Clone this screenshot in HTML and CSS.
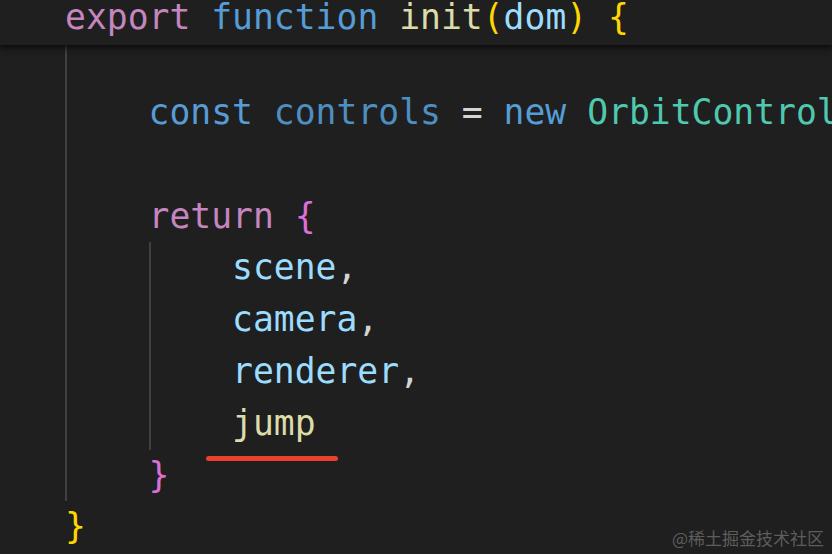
FILE: index.html
```html
<!DOCTYPE html>
<html>
<head>
<meta charset="utf-8">
<link rel="stylesheet" href="styles.css">
</head>
<body>
<div class="editor">
  <div class="sticky">
    <div class="line"><span class="kw">export</span> <span class="st">function</span> <span class="fn">init</span><span class="b1">(</span><span class="var">dom</span><span class="b1">)</span> <span class="b1">{</span></div>
  </div>
  <div class="code">
    <div class="line"><span class="ind"></span></div>
    <div class="line"><span class="ind"></span><span class="st">const</span> <span class="cv">controls</span> <span class="op">=</span> <span class="st">new</span> <span class="cls">OrbitControls</span></div>
    <div class="line"><span class="ind"></span></div>
    <div class="line"><span class="ind"></span><span class="kw">return</span> <span class="b2">{</span></div>
    <div class="line"><span class="ind"></span><span class="ind"></span><span class="var">scene</span><span class="op">,</span></div>
    <div class="line"><span class="ind"></span><span class="ind"></span><span class="var">camera</span><span class="op">,</span></div>
    <div class="line"><span class="ind"></span><span class="ind"></span><span class="var">renderer</span><span class="op">,</span></div>
    <div class="line"><span class="ind"></span><span class="ind"></span><span class="fn">jump</span></div>
    <div class="line"><span class="ind"></span><span class="b2">}</span></div>
    <div class="line"><span class="b1">}</span></div>
  </div>
  <div class="mark"></div>
  <div class="watermark">@稀土掘金技术社区</div>
</div>
</body>
</html>
```
FILE: styles.css
```css
html, body {
  margin: 0;
  padding: 0;
  background: #1f1f1f;
}
.editor {
  position: relative;
  width: 832px;
  height: 554px;
  overflow: hidden;
  background: #1f1f1f;
  font-family: "DejaVu Sans Mono", monospace;
  font-size: 34.7px;
  color: #d4d4d4;
}
.sticky {
  position: absolute;
  left: 0;
  top: 0;
  right: 0;
  height: 44.5px;
  background: #1f1f1f;
  box-shadow: 0 2px 6px 1px #0c0c0c;
  z-index: 2;
  padding-left: 65px;
  box-sizing: border-box;
}
.sticky .line {
  line-height: 35px;
  height: 35px;
}
.code {
  padding-top: 35.3px;
  padding-left: 65px;
}
.line {
  display: block;
  height: 51.8px;
  line-height: 51.8px;
  white-space: pre;
}
.ind {
  display: inline-block;
  vertical-align: top;
  width: 4ch;
  height: 51.8px;
  border-left: 2px solid #404040;
  box-sizing: border-box;
}
.kw { color: #c586c0; }
.st { color: #569cd6; }
.fn { color: #dcdcaa; }
.var { color: #9cdcfe; }
.cv { color: #4e8fc2; }
.cls { color: #4ec9b0; }
.op { color: #d4d4d4; }
.b1 { color: #ffd700; }
.b2 { color: #da70d6; }
.mark {
  position: absolute;
  left: 206px;
  top: 455.5px;
  width: 132px;
  height: 5px;
  border-radius: 3px;
  background: #e8412c;
}
.watermark {
  position: absolute;
  right: 8px;
  bottom: 6px;
  font-family: "Noto Sans CJK SC", sans-serif;
  font-size: 17px;
  line-height: 20px;
  color: rgba(255, 255, 255, 0.28);
}
```
